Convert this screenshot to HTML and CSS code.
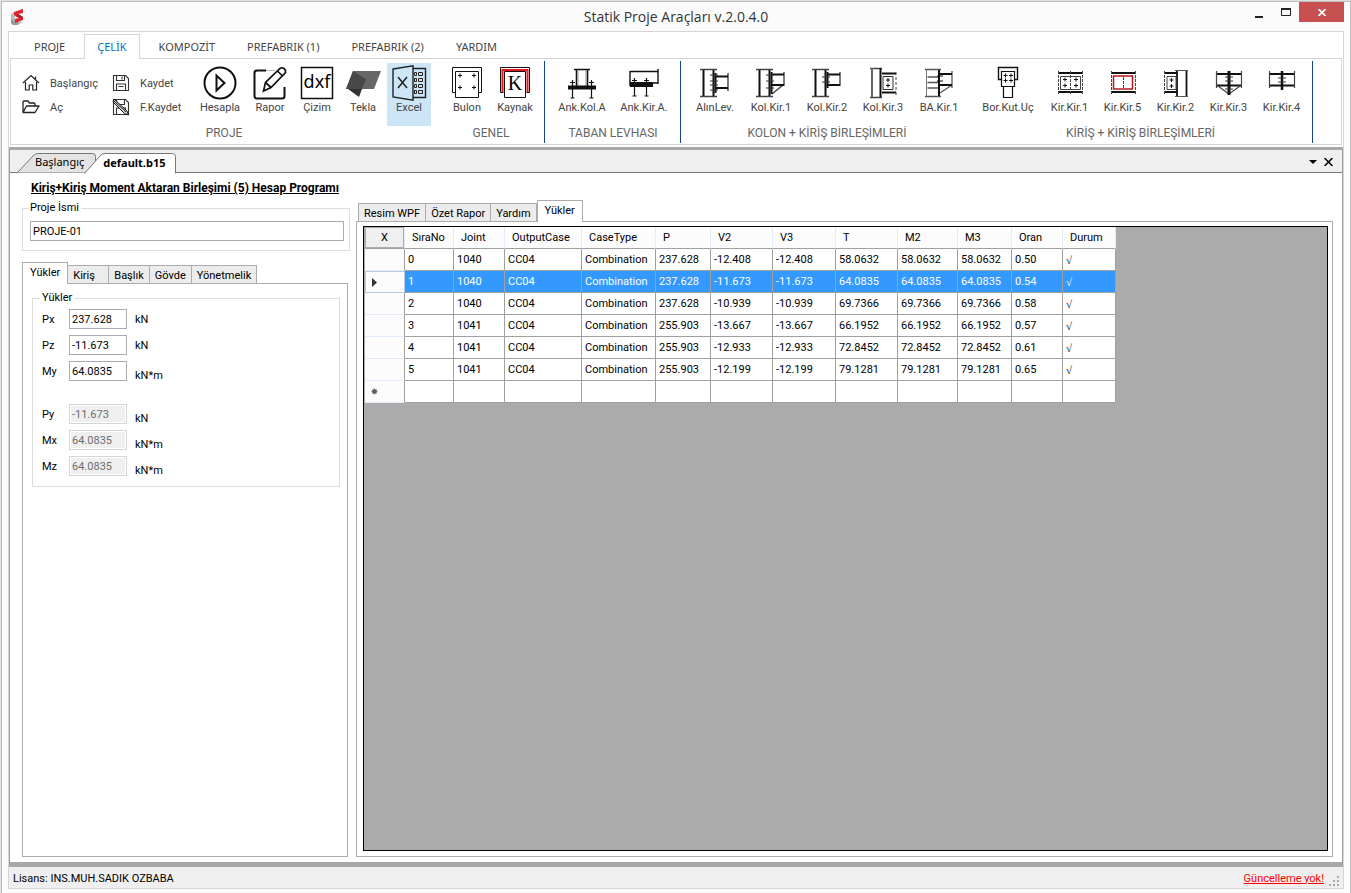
FILE: index.html
```html
<!DOCTYPE html>
<html lang="tr">
<head>
  <meta charset="UTF-8">
  <meta name="viewport" content="width=device-width, initial-scale=1.0">
  <title>Statik Proje Araçları v.2.0.4.0</title>
  <link rel="stylesheet" href="styles.css">
</head>
<body>
<div class="window">

  <!-- Title bar -->
  <header class="titlebar">
    <svg class="logo" width="16" height="18" viewBox="0 0 16 18"><path d="M1 6l4-2v9l8 1-5 3H3l-2-2z" fill="#b9bcc0"/><path d="M1 11l4 2 4 1-2 3H3l-2-2z" fill="#999"/><path d="M13 1v4l-5 1 5 3v3l-8 3v-4l4-1-5-3V4z" fill="#e0272d"/><path d="M8 6l5 3-1 2-7-3z" fill="#b81c22"/></svg>
    <h1 class="title">Statik Proje Araçları v.2.0.4.0</h1>
    <div class="controls">
      <button class="control" aria-label="Simge durumuna küçült"><svg width="8" height="12"><path d="M0 10h8v2H0z" fill="#222"/></svg></button>
      <button class="control" aria-label="Ekranı kapla"><svg width="10" height="8"><path d="M.5 1v6.500h9V1M0 1h10" fill="none" stroke="#222" stroke-width="1"/><path d="M0 0h10v2H0z" fill="#222"/></svg></button>
      <button class="control close" aria-label="Kapat"><svg width="8" height="7"><path d="M.5 0l7 7M7.500 0l-7 7" stroke="#fff" stroke-width="1.700"/></svg></button>
    </div>
  </header>

  <div class="frame">
    <!-- Ribbon -->
    <nav class="ribbon-tabs">
      <button class="ribbon-tab">PROJE</button>
      <button class="ribbon-tab active">ÇELİK</button>
      <button class="ribbon-tab">KOMPOZİT</button>
      <button class="ribbon-tab">PREFABRIK (1)</button>
      <button class="ribbon-tab">PREFABRIK (2)</button>
      <button class="ribbon-tab">YARDIM</button>
    </nav>

    <div class="ribbon">
      <section class="group">
        <div class="tools">
          <div class="small-tools">
            <button class="small-tool"><svg width="18" height="18" viewBox="0 0 18 18"><path d="M1 9l8-7.500L17 9M3.500 8v8h3.700v-5h3.600v5h3.700V8M13.500 5V2.500" fill="none" stroke="#222" stroke-width="1.200"/></svg>Başlangıç</button>
            <button class="small-tool"><svg width="18" height="18" viewBox="0 0 18 18"><path d="M1.500 1.500h12l3 3v12h-15zM4.500 1.500v5h8v-5M10 2.500v3M4.500 16.500v-6.500h9v6.500M6.500 12.500h5" fill="none" stroke="#333" stroke-width="1.100"/></svg>Kaydet</button>
            <button class="small-tool"><svg width="18" height="18" viewBox="0 0 18 18"><path d="M1 14V4q0-1 1-1h4l1.500 2H12q1 0 1 1v2M1 14.500L4.500 8H17l-4 6.500z" fill="none" stroke="#222" stroke-width="1.300" stroke-linejoin="round"/></svg>Aç</button>
            <button class="small-tool"><svg width="18" height="18" viewBox="0 0 18 18"><path d="M1.500 1.500h12l3 3v12h-15zM4.500 1.500v5h8v-5M4.500 16.500v-6.500h9v6.500" fill="none" stroke="#333" stroke-width="1.100"/><path d="M2 1l13 12 1.500 4-4-1.500L1 4z" fill="#ddd" stroke="#111"/><path d="M2 3l12 11" stroke="#111"/></svg>F.Kaydet</button>
          </div>
          <button class="tool w50"><svg width="34" height="34" viewBox="0 0 34 34"><circle cx="17" cy="17" r="15.500" fill="none" stroke="#111" stroke-width="2"/><path d="M13.500 9.500v15l8-7.500z" fill="none" stroke="#111" stroke-width="2"/></svg>Hesapla</button>
          <button class="tool w50"><svg width="34" height="34" viewBox="0 0 34 34"><path d="M13 4.500H4q-2.500 0-2.500 2.500v23q0 2.500 2.500 2.500h25q2.500 0 2.500-2.500v-9" fill="none" stroke="#111" stroke-width="2"/><path d="M13 4.500h9" stroke="#bbb"/><path d="M10.500 25l2-8.500L27 2.500q2-1.500 4 0t1.500 4L18 21.500zM12.500 16.500l5.500 5M24.500 5l5.500 5.500" fill="none" stroke="#111" stroke-width="1.700"/></svg>Rapor</button>
          <button class="tool w44"><svg width="34" height="34" viewBox="0 0 34 34"><path d="M1.500 1.500h31v31h-31z" fill="none" stroke="#111" stroke-width="1.500"/><text x="17" y="22" text-anchor="middle" class="dxf">dxf</text></svg>Çizim</button>
          <button class="tool w48"><svg width="36" height="34" viewBox="0 0 36 34"><path d="M8 5h28l-7 18H1z" fill="#666"/><path d="M8 5l13 8-4 10H1z" fill="#484848"/><path d="M3 23h14l-3 8z" fill="#333"/></svg>Tekla</button>
          <button class="tool w44 selected"><svg width="36" height="36" viewBox="0 0 36 36"><path d="M2 4L22 .8v34.400L2 32zM22 3.500h12.500v29H22" fill="none" stroke="#222" stroke-width="1.400"/><path d="M7 12l9 11M16 12L7 23" stroke="#222" stroke-width="1.500"/><path d="M23.500 7.500h2v3h-2zM27.500 7.500h4v3h-4zM23.500 13.500h2v3h-2zM27.500 13.500h4v3h-4zM23.500 19.500h2v3h-2zM27.500 19.500h4v3h-4zM23.500 25.500h2v3h-2zM27.500 25.500h4v3h-4z" fill="#ddd" stroke="#222"/></svg>Excel</button>
        </div>
        <h2 class="group-name">PROJE</h2>
      </section>

      <section class="group ruled">
        <div class="tools">
          <button class="tool w48"><svg width="32" height="34" viewBox="0 0 32 34"><path d="M4.500 26.500h-3v-25h29v25h-3" fill="none" stroke="#111"/><path d="M4.500 5.500h23v26h-23z" fill="none" stroke="#111"/><path d="M7 9.500h4M9 7.500v4M21 9.500h4M23 7.500v4M7 21.500h4M9 19.500v4M21 21.500h4M23 19.500v4" stroke="#111"/></svg>Bulon</button>
          <button class="tool w48"><svg width="32" height="34" viewBox="0 0 32 34"><path d="M4.500 26.500h-3v-25h29v25h-3" fill="none" stroke="#111"/><path d="M3.500 26V4h25v22" fill="none" stroke="#e8141c" stroke-width="2"/><path d="M5.500 5.500h21v26h-21z" fill="none" stroke="#111"/><text x="16" y="24" text-anchor="middle" class="weld">K</text></svg>Kaynak</button>
        </div>
        <h2 class="group-name">GENEL</h2>
      </section>

      <section class="group ruled">
        <div class="tools">
          <button class="tool w62"><svg width="32" height="34" viewBox="0 0 32 34"><path d="M8 3.500h16M10.500 4v16M21.500 4v16" fill="none" stroke="#111" stroke-width="1.600"/><path d="M12 4v16M20 4v16" stroke="#999"/><path d="M2 19.500h28v4H2z" fill="#111"/><path d="M6.500 14v18M25.500 14v18M4 16.500h5M23 16.500h5M4.500 32h4M23.500 32h4" stroke="#111" stroke-width="1.200"/></svg>Ank.Kol.A</button>
          <button class="tool w62"><svg width="32" height="34" viewBox="0 0 32 34"><path d="M2 5.500h28M30 3v15M2 5v15M23 17h7" fill="none" stroke="#111" stroke-width="1.400"/><path d="M2 16h23v5H2z" fill="#111"/><path d="M6.500 12v18M18.500 12v18M4 14.500h5M16 14.500h5M4.500 30h4M16.500 30h4" stroke="#111" stroke-width="1.200"/></svg>Ank.Kir.A.</button>
        </div>
        <h2 class="group-name">TABAN LEVHASI</h2>
      </section>

      <section class="group">
        <div class="tools">
          <button class="tool w56"><svg width="32" height="34" viewBox="0 0 32 34"><path d="M1 3.500h17M1 30.500h17M29 7v18" stroke="#444" stroke-width="1.400"/><path d="M4.500 4v26M14.500 4v26M17 10.500h12M17 22h12" stroke="#111" stroke-width="2"/><path d="M16.500 7v20" stroke="#111" stroke-width="2"/><path d="M11 9h8M11 15h8M11 19h8M11 24h8" stroke="#333"/></svg>AlınLev.</button>
          <button class="tool w56"><svg width="32" height="34" viewBox="0 0 32 34"><path d="M1 3.500h17M1 30.500h17M29 6v14M17 28l11-9" stroke="#444" stroke-width="1.400"/><path d="M4.500 4v26M14.500 4v26M17 8.500h12M17 19h12" stroke="#111" stroke-width="2"/><path d="M16.500 6v22" stroke="#111" stroke-width="2"/><path d="M11 9h8M11 15h8M11 22h8" stroke="#333"/></svg>Kol.Kir.1</button>
          <button class="tool w56"><svg width="32" height="34" viewBox="0 0 32 34"><path d="M1 3.500h17M1 30.500h17M29 6v14" stroke="#444" stroke-width="1.400"/><path d="M4.500 4v26M14.500 4v26M17 8.500h12M17 19h12" stroke="#111" stroke-width="2"/><path d="M16.500 6v16" stroke="#111" stroke-width="2"/><path d="M11 11h8M11 16h8" stroke="#333"/></svg>Kol.Kir.2</button>
          <button class="tool w56"><svg width="32" height="34" viewBox="0 0 32 34"><path d="M3 2.500h12M3 31.500h12" stroke="#444" stroke-width="1.400"/><path d="M5 2v29" stroke="#666" stroke-width="2"/><path d="M13.500 2v29M15 7.500h14M15 26.500h14" stroke="#111" stroke-width="2"/><path d="M16 10.500h10v13H16z" fill="none" stroke="#333"/><path d="M19 14h4M21 12v4M19 19.500h4M21 17.500v4" stroke="#111"/><path d="M29 6v23" stroke="#444" stroke-dasharray="3 2"/></svg>Kol.Kir.3</button>
          <button class="tool w56"><svg width="32" height="34" viewBox="0 0 32 34"><path d="M2 3.500h16M2 30.500h16M29 5v17M17 27l12-8M4.500 11h11M4.500 16.500h11M4.500 22h11" stroke="#555" stroke-width="1.300"/><path d="M3.500 4v26" stroke="#777"/><path d="M16 4v26M17 8h12M17 19h12" stroke="#111" stroke-width="2"/><path d="M14 10h6M14 15h6" stroke="#111"/></svg>BA.Kir.1</button>
        </div>
        <h2 class="group-name">KOLON + KİRİŞ BİRLEŞİMLERİ</h2>
      </section>

      <section class="group ruled last">
        <div class="tools">
          <button class="tool w70"><svg width="32" height="34" viewBox="0 0 32 34"><path d="M9 13.500H6.500v-12h19v12H23" fill="none" stroke="#111" stroke-width="1.400"/><path d="M9.500 5.500h13v15h-13zM11.500 20v11.500h9V20" fill="none" stroke="#111" stroke-width="1.200"/><path d="M11.500 9.500h4M13.500 7.500v4M17 9.500h4M19 7.500v4M11.500 14.500h4M13.500 12.500v4M17 14.500h4M19 12.500v4M10 20.500h12" stroke="#111"/></svg>Bor.Kut.Uç</button>
          <button class="tool w53"><svg width="32" height="34" viewBox="0 0 32 34"><path d="M4 7h24M4 26h24" stroke="#111" stroke-width="2"/><path d="M6.500 10.500h20v13h-20z" fill="none" stroke="#444"/><path d="M4.500 5v24M28.500 5v24M16.500 5v24" stroke="#444" stroke-dasharray="3 1"/><path d="M9 13.500h4M11 11.500v4M9 19.500h4M11 17.500v4M20 13.500h4M22 11.500v4M20 19.500h4M22 17.500v4" stroke="#111"/></svg>Kir.Kir.1</button>
          <button class="tool w53"><svg width="32" height="34" viewBox="0 0 32 34"><path d="M4 7h24M4 26h24" stroke="#111" stroke-width="2"/><path d="M4.500 5v24M28.500 5v24M16.500 11v12" stroke="#444" stroke-dasharray="3 1"/><path d="M6.500 10h19v13h-19z" fill="none" stroke="#b8171c" stroke-width="1.500"/></svg>Kir.Kir.5</button>
          <button class="tool w53"><svg width="32" height="34" viewBox="0 0 32 34"><path d="M4 7h13M4 26h13M17 5v25M26.500 5v25" stroke="#111" stroke-width="1.800"/><path d="M15 4.500h13M15 30.500h13" stroke="#555"/><path d="M7 10.500h9v13H7z" fill="none" stroke="#444"/><path d="M4.500 5v24" stroke="#444" stroke-dasharray="3 1"/><path d="M9.500 14h4M11.500 12v4M9.500 20h4M11.500 18v4" stroke="#111"/></svg>Kir.Kir.2</button>
          <button class="tool w53"><svg width="32" height="34" viewBox="0 0 32 34"><path d="M3 8h26M3 19.500h26" stroke="#111" stroke-width="2"/><path d="M3.500 5v17M28.500 5v17M5 20l11 8 11-8" fill="none" stroke="#444" stroke-width="1.200"/><path d="M16 5v24" stroke="#111" stroke-width="3"/><path d="M12 11h8M12 15h8M12 23h8" stroke="#333"/></svg>Kir.Kir.3</button>
          <button class="tool w53"><svg width="32" height="34" viewBox="0 0 32 34"><path d="M3 8h26M3 19.500h26" stroke="#111" stroke-width="2"/><path d="M3.500 5v17M28.500 5v17" stroke="#444" stroke-width="1.200"/><path d="M16 5v19" stroke="#111" stroke-width="2.500"/><path d="M12 12h8M12 16h8" stroke="#333"/></svg>Kir.Kir.4</button>
        </div>
        <h2 class="group-name">KİRİŞ + KİRİŞ BİRLEŞİMLERİ</h2>
      </section>
    </div>

    <!-- Document area -->
    <main class="document">
      <div class="doc-tabs">
        <button class="doc-tab"><svg class="doc-shape" width="79" height="20"><path d="M.5 19.500L16 3q2-2.500 5-2.500h54.500q3 0 3 3v16" fill="#e3e3e3" stroke="#777"/></svg><span class="doc-name">Başlangıç</span></button>
        <button class="doc-tab active"><svg class="doc-shape" width="92" height="21"><path d="M.5 20.500L16 3q2-2.500 5-2.500h67.500q3 0 3 3v17" fill="#fff" stroke="#777"/></svg><span class="doc-name">default.b15</span></button>
        <div class="doc-actions">
          <button class="doc-action" aria-label="Açık belgeler"><svg width="8" height="4"><path d="M0 0h8L4 4z"/></svg></button>
          <button class="doc-action" aria-label="Belgeyi kapat"><svg width="9" height="8"><path d="M.5 0l8 8M8.500 0l-8 8" stroke="#000" stroke-width="1.500"/></svg></button>
        </div>
      </div>

      <div class="workspace">
        <div class="left">
          <h2 class="heading">Kiriş+Kiriş Moment Aktaran Birleşimi (5) Hesap Programı</h2>
          <fieldset class="box project">
            <legend><label for="project-name">Proje İsmi</label></legend>
            <input class="field" id="project-name" type="text" value="PROJE-01">
          </fieldset>

          <div class="tabs">
            <button class="tab active">Yükler</button>
            <button class="tab wide">Kiriş</button>
            <button class="tab">Başlık</button>
            <button class="tab">Gövde</button>
            <button class="tab">Yönetmelik</button>
          </div>
          <div class="pane">
            <fieldset class="box loads">
              <legend>Yükler</legend>
              <div class="load"><label for="px">Px</label><input class="field" id="px" type="text" value="237.628"><span class="unit">kN</span></div>
              <div class="load"><label for="pz">Pz</label><input class="field" id="pz" type="text" value="-11.673"><span class="unit">kN</span></div>
              <div class="load"><label for="my">My</label><input class="field" id="my" type="text" value="64.0835"><span class="unit low">kN*m</span></div>
              <div class="load second"><label for="py">Py</label><input class="field" id="py" type="text" value="-11.673" disabled><span class="unit low">kN</span></div>
              <div class="load"><label for="mx">Mx</label><input class="field" id="mx" type="text" value="64.0835" disabled><span class="unit low">kN*m</span></div>
              <div class="load"><label for="mz">Mz</label><input class="field" id="mz" type="text" value="64.0835" disabled><span class="unit low">kN*m</span></div>
            </fieldset>
          </div>
        </div>

        <div class="right">
          <div class="tabs">
            <button class="tab">Resim WPF</button>
            <button class="tab">Özet Rapor</button>
            <button class="tab">Yardım</button>
            <button class="tab active">Yükler</button>
          </div>
          <div class="pane grid-pane">
            <div class="grid">
              <table class="results">
                <colgroup>
                  <col class="c-mark"><col class="c-no"><col class="c-joint"><col class="c-case"><col class="c-type"><col class="c-p">
                  <col class="c-num"><col class="c-v3"><col class="c-num"><col class="c-m"><col class="c-m3"><col class="c-ratio"><col class="c-state">
                </colgroup>
                <thead>
                  <tr><th class="corner"><button class="clear">X</button></th><th>SıraNo</th><th>Joint</th><th>OutputCase</th><th>CaseType</th><th>P</th><th>V2</th><th>V3</th><th>T</th><th>M2</th><th>M3</th><th>Oran</th><th>Durum</th></tr>
                </thead>
                <tbody>
                  <tr><th></th><td>0</td><td>1040</td><td>CC04</td><td>Combination</td><td>237.628</td><td>-12.408</td><td>-12.408</td><td>58.0632</td><td>58.0632</td><td>58.0632</td><td>0.50</td><td>√</td></tr>
                  <tr class="selected"><th><svg width="5" height="9"><path d="M0 0l5 4.500L0 9z" fill="#333"/></svg></th><td>1</td><td>1040</td><td>CC04</td><td>Combination</td><td>237.628</td><td>-11.673</td><td>-11.673</td><td>64.0835</td><td>64.0835</td><td>64.0835</td><td>0.54</td><td>√</td></tr>
                  <tr><th></th><td>2</td><td>1040</td><td>CC04</td><td>Combination</td><td>237.628</td><td>-10.939</td><td>-10.939</td><td>69.7366</td><td>69.7366</td><td>69.7366</td><td>0.58</td><td>√</td></tr>
                  <tr><th></th><td>3</td><td>1041</td><td>CC04</td><td>Combination</td><td>255.903</td><td>-13.667</td><td>-13.667</td><td>66.1952</td><td>66.1952</td><td>66.1952</td><td>0.57</td><td>√</td></tr>
                  <tr><th></th><td>4</td><td>1041</td><td>CC04</td><td>Combination</td><td>255.903</td><td>-12.933</td><td>-12.933</td><td>72.8452</td><td>72.8452</td><td>72.8452</td><td>0.61</td><td>√</td></tr>
                  <tr><th></th><td>5</td><td>1041</td><td>CC04</td><td>Combination</td><td>255.903</td><td>-12.199</td><td>-12.199</td><td>79.1281</td><td>79.1281</td><td>79.1281</td><td>0.65</td><td>√</td></tr>
                  <tr><th><svg class="new-row" width="7" height="7"><circle cx="3.500" cy="3.500" r="2.300" fill="#333"/><path d="M0 3.500h7M3.500 0v7M1 1l5 5M6 1L1 6" stroke="#777" stroke-width=".6"/></svg></th><td></td><td></td><td></td><td></td><td></td><td></td><td></td><td></td><td></td><td></td><td></td><td></td></tr>
                </tbody>
              </table>
            </div>
          </div>
        </div>
      </div>
    </main>

    <!-- Status bar -->
    <footer class="status">
      <span>Lisans: INS.MUH.SADIK OZBABA</span>
      <a class="update" href="#">Güncelleme yok!</a>
      <svg class="grip" width="10" height="10"><path d="M8 0h2v2H8zM4 4h2v2H4zM8 4h2v2H8zM0 8h2v2H0zM4 8h2v2H4zM8 8h2v2H8z" fill="#aaa"/></svg>
    </footer>
  </div>
</div>
</body>
</html>
```
FILE: styles.css
```css
* {
  margin: 0;
  padding: 0;
  box-sizing: border-box;
}

body {
  font-family: Roboto, "Liberation Sans", sans-serif;
  font-size: 11px;
  color: #000;
  background-color: #e0e0e0;
  padding: 1px 0 0 1px;
}

button,
input {
  font: inherit;
  color: inherit;
}

button {
  border: none;
  background: none;
  white-space: nowrap;
}

.window {
  display: flex;
  flex-direction: column;
  min-height: calc(100vh - 1px);
  padding: 0 6px 4px;
  border: 1px solid #bdbdbd;
  border-bottom: none;
  background-color: #fbfbfb;
}

/* Title bar */
.titlebar {
  display: grid;
  grid-template-columns: 1fr auto 1fr;
  height: 29px;
}

.logo {
  margin: 6px 0 0 2px;
}

.title {
  font-family: "Open Sans", sans-serif;
  font-size: 14px;
  font-weight: normal;
  line-height: 29px;
  color: #333;
}

.controls {
  display: flex;
  justify-content: flex-end;
}

.control {
  display: flex;
  align-items: center;
  justify-content: center;
  width: 27px;
  height: 20px;
}

.control.close {
  width: 45px;
  background-color: #c75050;
}

.frame {
  flex: 1;
  display: flex;
  flex-direction: column;
  border: 1px solid #d5d5d5;
  background-color: #fff;
}

/* Ribbon */
.ribbon-tabs {
  display: flex;
  align-items: flex-end;
  gap: 6px;
  height: 26px;
  padding-left: 12px;
}

.ribbon-tab {
  height: 24px;
  padding: 0 12px;
  border: 1px solid transparent;
  border-bottom: none;
  font-family: "Noto Sans", sans-serif;
  color: #444;
}

.ribbon-tab.active {
  position: relative;
  height: 25px;
  margin-bottom: -1px;
  padding-bottom: 1px;
  border-color: #d5d5d5;
  background-color: #fff;
  color: #0072c6;
}

.ribbon {
  display: flex;
  height: 87px;
  margin: 0 1px 2px;
  padding: 2px 0 1px 6px;
  border: 1px solid #d5d5d5;
  color: #444;
}

.group {
  padding: 2px 5px 0 6px;
}

.group:first-child {
  padding: 2px 6px 0 0;
}

.group.ruled {
  border-right: 1px solid #15428b;
}

.group.last {
  padding: 2px 4px 0 1px;
}

.tools {
  display: flex;
  height: 63px;
}

.small-tools {
  display: grid;
  grid-template-columns: 90px 88px;
  grid-template-rows: 24px 24px;
  padding-top: 8px;
}

.small-tool {
  display: flex;
  align-items: center;
  gap: 10px;
  padding-left: 5px;
}

.tool {
  display: flex;
  flex-direction: column;
  align-items: center;
  justify-content: flex-start;
  line-height: 14px;
  padding-top: 2px;
}

.tool svg {
  height: 36px;
}

.tool.selected {
  background-color: #cde6f7;
}

.w44 { width: 44px; }
.w48 { width: 48px; }
.w50 { width: 50px; }
.w53 { width: 53px; }
.w56 { width: 56px; }
.w62 { width: 62px; }
.w70 { width: 70px; }

.dxf {
  font-family: "Noto Sans", sans-serif;
  font-size: 18px;
}

.weld {
  font-family: "Liberation Serif", serif;
  font-size: 20px;
}

.group-name {
  font-size: 12px;
  font-weight: normal;
  line-height: 14px;
  text-align: center;
  color: #666;
}

/* Document tabs */
.document {
  flex: 1;
  display: flex;
  flex-direction: column;
  border: 1px solid #a0a0a0;
  border-width: 3px 1px 5px;
  border-color: #a8a8a8 #a0a0a0;
}

.doc-tabs {
  display: flex;
  align-items: flex-end;
  height: 23px;
  padding-left: 7px;
  border-bottom: 1px solid #777;
  background-color: #efefef;
}

.doc-tab {
  position: relative;
  height: 19px;
  padding: 0 9px 2px 18px;
  font-family: "Noto Sans", sans-serif;
}

.doc-tab.active {
  height: 20px;
  margin: 0 0 -1px -9px;
  padding-left: 19px;
  font-weight: bold;
}

.doc-shape {
  position: absolute;
  left: 0;
  top: 0;
}

.doc-name {
  position: relative;
}

.doc-actions {
  display: flex;
  gap: 7px;
  align-items: center;
  height: 21px;
  margin-left: auto;
  padding-right: 9px;
}

.doc-action {
  display: flex;
}

/* Work area */
.workspace {
  flex: 1;
  display: flex;
  gap: 8px;
  padding: 6px 9px 5px 12px;
}

.left {
  display: flex;
  flex-direction: column;
  width: 326px;
}

.right {
  flex: 1;
  display: flex;
  flex-direction: column;
  padding-top: 21px;
}

.heading {
  margin-left: 9px;
  font-size: 12px;
  line-height: 18px;
  text-decoration: underline;
  white-space: nowrap;
}

.box {
  border: 1px solid #dcdcdc;
}

.box legend {
  margin-left: -2px;
  padding: 0 2px;
  line-height: 14px;
}

.field {
  height: 20px;
  padding: 1px 2px 0;
  border: 1px solid #ababb3;
  background-color: #fff;
}

.field:disabled {
  border-color: #d5d5d5;
  background-color: #efefef;
  box-shadow: inset 0 0 0 1px #fff;
  color: #6d6d6d;
}

.project {
  margin: 4px -2px 0 0;
  padding: 6px 5px 9px 7px;
}

.project .field {
  display: block;
  width: 100%;
}

.tabs {
  display: flex;
  align-items: flex-end;
  height: 21px;
  padding: 0 2px;
}

.left .tabs {
  margin-top: 11px;
  padding-left: 0;
}

.tab {
  height: 18px;
  padding: 1px 5px 0;
  border: 1px solid #acacac;
  border-bottom: none;
  background-color: #ececec;
}

.tab + .tab {
  border-left: none;
}

.tab.active {
  position: relative;
  height: 22px;
  margin-bottom: -1px;
  padding: 0 7px 2px;
  border-left: 1px solid #acacac;
  background-color: #fff;
}

.tab.wide {
  width: 41px;
  text-align: left;
}

.pane {
  flex: 1;
  padding: 7px 7px 7px 9px;
  border: 1px solid #acacac;
  background-color: #fff;
}

.loads {
  padding: 4px 9px 4px;
}

.load {
  display: flex;
  height: 26px;
  line-height: 22px;
}

.load.second {
  margin-top: 17px;
}

.load label {
  width: 27px;
}

.load .field {
  width: 58px;
  margin-right: 8px;
}

.unit.low {
  padding-top: 4px;
}

/* Results grid */
.grid-pane {
  display: flex;
  padding: 4px 4px 5px 6px;
}

.grid {
  flex: 1;
  padding-left: 1px;
  border: 1px solid #000;
  background-color: #ababab;
}

.results {
  width: 751px;
  table-layout: fixed;
  border-collapse: separate;
  border-spacing: 0;
  background-color: #fff;
}

.c-mark { width: 40px; }
.c-no { width: 49px; }
.c-joint { width: 51px; }
.c-case { width: 77px; }
.c-type { width: 74px; }
.c-p { width: 55px; }
.c-num { width: 62px; }
.c-v3 { width: 63px; }
.c-m { width: 60px; }
.c-m3 { width: 54px; }
.c-ratio { width: 51px; }
.c-state { width: 53px; }

.results th {
  height: 22px;
  padding-left: 7px;
  border-right: 1px solid #e3ecf9;
  border-bottom: 1px solid #e3ecf9;
  background-color: #fcfcfc;
  font-weight: normal;
  text-align: left;
}

.results thead th {
  border-bottom-color: #a0a0a0;
}

.results tbody th {
  padding-left: 6px;
  border-right-color: #a0a0a0;
}

.results th.corner {
  padding: 0;
}

.results th svg {
  display: block;
}

.clear {
  display: block;
  width: 100%;
  height: 21px;
  border: 1px solid #acacac;
  background-color: #efefef;
}

.results td {
  height: 22px;
  padding-left: 3px;
  border-right: 1px solid #a0a0a0;
  border-bottom: 1px solid #a0a0a0;
}

.results td:last-child {
  font-family: "Liberation Serif", serif;
  line-height: 12px;
}

.results .selected td {
  background-color: #3399ff;
  color: #fff;
}

.results .selected th {
  border: 1px solid #b8cbe3;
}

/* Status bar */
.status {
  display: flex;
  align-items: center;
  height: 21px;
  padding: 1px 4px 0;
  background-color: #efefef;
}

.update {
  margin-left: auto;
  color: #ff0000;
}

.grip {
  margin: 6px 0 0 5px;
}
```
